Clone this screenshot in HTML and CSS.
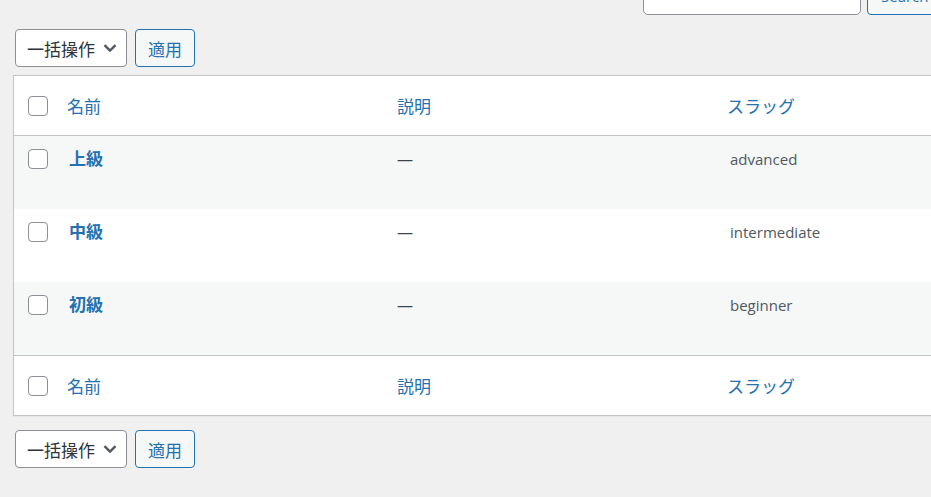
FILE: index.html
```html
<!DOCTYPE html>
<html lang="ja">
<head>
  <meta charset="UTF-8" />
  <title>タグ</title>
  <link rel="stylesheet" href="styles.css">
</head>
<body>
  <div class="wrap">
    <div class="search-box">
      <input type="search" class="search-input" />
      <button class="button button-latin">Search</button>
    </div>

    <div class="tablenav top">
      <div class="bulk-select">一括操作
        <svg class="chev" width="14" height="10" viewBox="0 0 14 10"><path d="M1.5 2.2l5.5 5.3 5.5-5.3" fill="none" stroke="#50575e" stroke-width="2.4"/></svg>
      </div>
      <button class="button apply">適用</button>
    </div>

    <table class="list-table">
      <thead>
        <tr>
          <th class="col-cb"><span class="cb"></span></th>
          <th class="col-name"><a href="#">名前</a></th>
          <th class="col-desc"><a href="#">説明</a></th>
          <th class="col-slug"><a href="#">スラッグ</a></th>
        </tr>
      </thead>
      <tbody>
        <tr class="alt">
          <td class="col-cb"><span class="cb"></span></td>
          <td class="col-name"><a class="row-title" href="#">上級</a></td>
          <td class="col-desc">—</td>
          <td class="col-slug">advanced</td>
        </tr>
        <tr>
          <td class="col-cb"><span class="cb"></span></td>
          <td class="col-name"><a class="row-title" href="#">中級</a></td>
          <td class="col-desc">—</td>
          <td class="col-slug">intermediate</td>
        </tr>
        <tr class="alt">
          <td class="col-cb"><span class="cb"></span></td>
          <td class="col-name"><a class="row-title" href="#">初級</a></td>
          <td class="col-desc">—</td>
          <td class="col-slug">beginner</td>
        </tr>
      </tbody>
      <tfoot>
        <tr>
          <th class="col-cb"><span class="cb"></span></th>
          <th class="col-name"><a href="#">名前</a></th>
          <th class="col-desc"><a href="#">説明</a></th>
          <th class="col-slug"><a href="#">スラッグ</a></th>
        </tr>
      </tfoot>
    </table>

    <div class="tablenav bottom">
      <div class="bulk-select">一括操作
        <svg class="chev" width="14" height="10" viewBox="0 0 14 10"><path d="M1.5 2.2l5.5 5.3 5.5-5.3" fill="none" stroke="#50575e" stroke-width="2.4"/></svg>
      </div>
      <button class="button apply">適用</button>
    </div>
  </div>
</body>
</html>
```

FILE: styles.css
```css
* { box-sizing: border-box; }

body {
  margin: 0;
  background: #f0f0f1;
  color: #3c434a;
  font-family: 'Open Sans', 'Noto Sans CJK JP', sans-serif;
  font-size: 17px;
  overflow: hidden;
}

a {
  color: #2271b1;
  text-decoration: none;
}

.wrap {
  padding-left: 13px;
  width: 1200px;
}

.search-box {
  display: flex;
  gap: 6px;
  margin: -23px 0 0 630px;
  height: 38px;
}

.search-input {
  width: 218px;
  height: 38px;
  border: 1px solid #8c8f94;
  border-radius: 5px;
  background: #fff;
}

.button {
  height: 38px;
  padding: 0 13px;
  border: 1px solid #2271b1;
  border-radius: 4px;
  background: #f6f7f7;
  color: #2271b1;
  font-family: 'Open Sans', 'Noto Sans CJK JP', sans-serif;
  font-size: 17px;
}

.button.apply {
  width: 60px;
  padding: 0;
}

.button-latin {
  font-size: 15px;
}

.tablenav {
  display: flex;
  gap: 8px;
  padding-left: 2px;
}

.tablenav.top {
  margin: 14px 0 8px;
}

.tablenav.bottom {
  margin-top: 14px;
}

.bulk-select {
  display: flex;
  align-items: center;
  justify-content: space-between;
  width: 112px;
  height: 38px;
  padding: 0 9px 0 11px;
  border: 1px solid #8c8f94;
  border-radius: 4px;
  background: #fff;
  color: #2c3338;
}

.list-table {
  width: 1100px;
  border: 1px solid #c3c4c7;
  border-spacing: 0;
  background: #fff;
  box-shadow: 0 1px 1px rgba(0, 0, 0, 0.04);
}

.list-table th {
  height: 60px;
  padding: 0 12px;
  text-align: left;
  font-weight: 400;
  vertical-align: middle;
}

.list-table thead th {
  border-bottom: 1px solid #c3c4c7;
}

.list-table tfoot th {
  border-top: 1px solid #c3c4c7;
}

.list-table td {
  height: 73px;
  padding: 12px 12px 0;
  vertical-align: top;
  line-height: 22px;
}

.list-table tr.alt td {
  background: #f6f7f7;
}

.col-cb {
  width: 41px;
}

.list-table th.col-cb {
  padding: 0 0 0 14px;
}

.list-table td.col-cb {
  padding: 13px 0 0 14px;
}

.col-name { width: 330px; }
.col-desc { width: 330px; }

.list-table td.col-name { padding-left: 14px; }
.list-table td.col-desc { padding-left: 12px; font-size: 16px; }
.list-table td.col-slug { padding-left: 15px; font-size: 15px; color: #50575e; }

.row-title {
  font-weight: 700;
}

.cb {
  display: block;
  width: 20px;
  height: 20px;
  border: 1px solid #8c8f94;
  border-radius: 4px;
  background: #fff;
}

.list-table th .cb {
  margin-top: 1px;
}
```
